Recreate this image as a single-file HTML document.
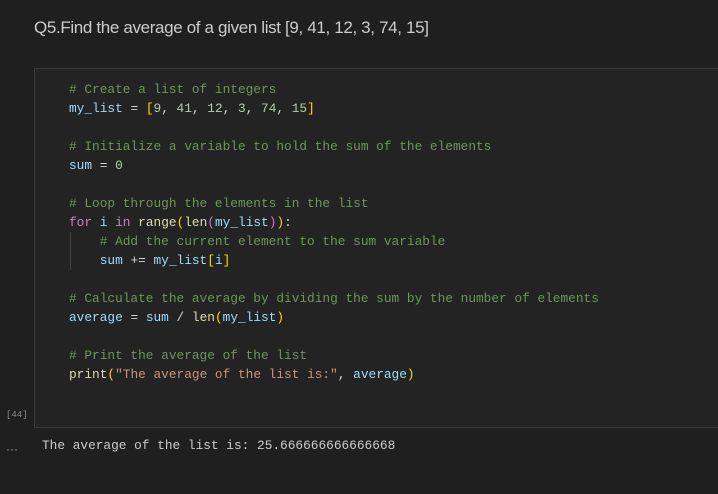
<!DOCTYPE html>
<html><head><meta charset="utf-8"><style>
html,body{margin:0;padding:0;background:#1f1f1f;width:718px;height:494px;overflow:hidden}
.t{position:absolute;left:34px;top:18px;font-family:"Liberation Sans",sans-serif;font-size:17px;color:#cccccc;letter-spacing:-0.35px;white-space:nowrap}
.cell{position:absolute;left:34px;top:68px;width:690px;height:360px;background:#232323;border:1px solid #3a3a3a;box-sizing:border-box}
pre{position:absolute;left:69px;top:80px;margin:0;font-family:"Liberation Mono",monospace;font-size:12.8px;line-height:19px;color:#d4d4d4}
.c{color:#6a9955}.v{color:#9cdcfe}.n{color:#b5cea8}.k{color:#c586c0}.f{color:#dcdcaa}.s{color:#ce9178}.y{color:#ffd700}.p{color:#da70d6}.b{color:#179fff}
.guide{position:absolute;left:70px;top:232px;width:1px;height:38px;background:#404040}
.num{position:absolute;left:6px;top:410px;font-family:"Liberation Mono",monospace;font-size:9px;color:#8a8a8a}
.dots{position:absolute;left:6px;top:442px;font-family:"Liberation Sans",sans-serif;font-size:12px;color:#aaa}
.out{position:absolute;left:42px;top:438px;font-family:"Liberation Mono",monospace;font-size:12.8px;color:#cccccc;white-space:pre}
</style></head><body>
<div class="t">Q5.Find the average of a given list [9, 41, 12, 3, 74, 15]</div>
<div class="cell"></div>
<div class="guide"></div>
<pre><span class="c"># Create a list of integers</span>
<span class="v">my_list</span> = <span class="y">[</span><span class="n">9</span>, <span class="n">41</span>, <span class="n">12</span>, <span class="n">3</span>, <span class="n">74</span>, <span class="n">15</span><span class="y">]</span>

<span class="c"># Initialize a variable to hold the sum of the elements</span>
<span class="v">sum</span> = <span class="n">0</span>

<span class="c"># Loop through the elements in the list</span>
<span class="k">for</span> <span class="v">i</span> <span class="k">in</span> <span class="f">range</span><span class="y">(</span><span class="f">len</span><span class="p">(</span><span class="v">my_list</span><span class="p">)</span><span class="y">)</span>:
    <span class="c"># Add the current element to the sum variable</span>
    <span class="v">sum</span> += <span class="v">my_list</span><span class="y">[</span><span class="v">i</span><span class="y">]</span>

<span class="c"># Calculate the average by dividing the sum by the number of elements</span>
<span class="v">average</span> = <span class="v">sum</span> / <span class="f">len</span><span class="y">(</span><span class="v">my_list</span><span class="y">)</span>

<span class="c"># Print the average of the list</span>
<span class="f">print</span><span class="y">(</span><span class="s">"The average of the list is:"</span>, <span class="v">average</span><span class="y">)</span></pre>
<div class="num">[44]</div>
<div class="dots">···</div>
<div class="out">The average of the list is: 25.666666666666668</div>
</body></html>
